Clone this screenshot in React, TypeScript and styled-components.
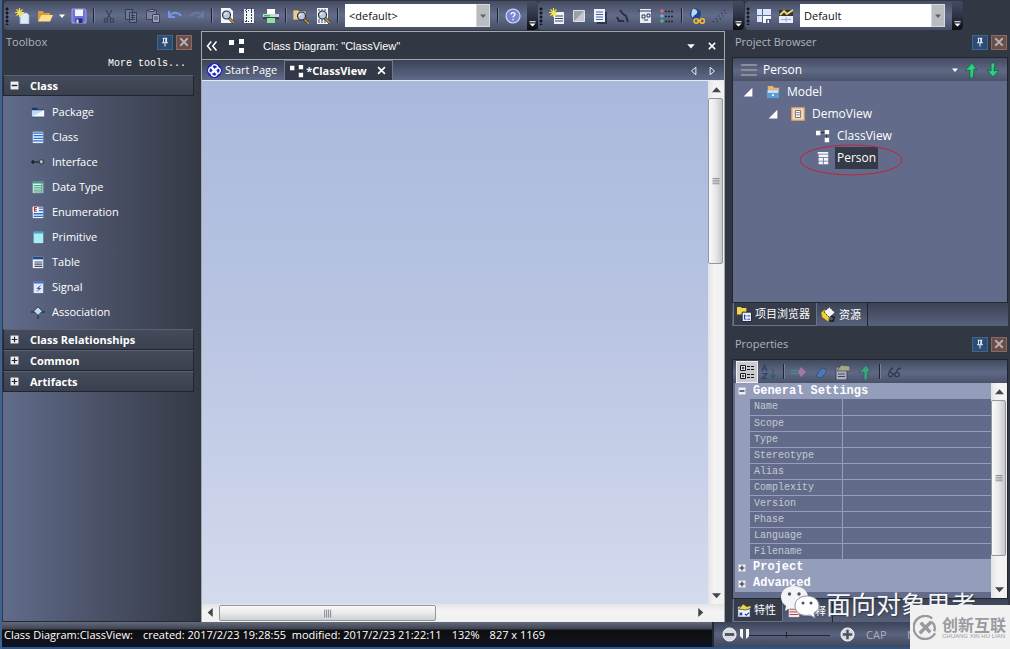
import React from 'react';
import styled, { createGlobalStyle, css } from 'styled-components';

const ui = '"Open Sans", "Noto Sans CJK SC", sans-serif';
const mono = '"Liberation Mono", "Noto Sans CJK SC", monospace';
const barGradient = 'linear-gradient(#434a60, #5f6986 55%, #4a5269)';

const Global = createGlobalStyle`
  * { box-sizing: border-box; }
  body { margin: 0; background: #323843; color: #fff; font: 11px/16px ${ui}; }
  button { border: 0; padding: 0; background: none; color: inherit; font: inherit; }
  ul { list-style: none; margin: 0; padding: 0; }
  h2, h3, p { margin: 0; font: inherit; }
  svg { display: block; flex: none; }
`;

const Window = styled.div`
  position: relative;
  display: flex;
  flex-direction: column;
  min-height: 100vh;
  overflow: hidden;
  border-left: 2px solid #3f628f;
`;

/* ---------- top toolbars ---------- */
const ToolbarRow = styled.header`
  display: flex;
  height: 31px;
  padding: 1px 0 1px 2px;
  background: #323843;
`;
const Toolbar = styled.div<{ $tail?: number }>`
  display: flex;
  align-items: center;
  height: 29px;
  margin-right: ${p => p.$tail ?? 0}px;
  border-radius: 4px;
  background: linear-gradient(#454c62, #626c8a 50%, #464e65);
  overflow: hidden;
`;
const Grip = styled.span`
  width: 7px;
  height: 18px;
  margin-right: 1px;
  background: radial-gradient(circle at 3px 2px, #15181f 1px, transparent 2px) 0 0 / 7px 4px;
`;
const ToolButton = styled.button<{ $w?: number; $dim?: boolean; $pressed?: boolean }>`
  display: grid;
  place-items: center;
  width: ${p => p.$w ?? 22}px;
  height: 22px;
  flex: none;
  opacity: ${p => (p.$dim ? 0.6 : 1)};
  ${p => p.$pressed && css`background: #c9cbd1; border: 1px solid #eceef2;`}
`;
const Separator = styled.span`
  flex: none;
  width: 2px;
  height: 15px;
  margin: 0 3px;
  background: #1f2430;
  border-right: 1px solid #77809b;
`;
const Overflow = styled.button`
  align-self: stretch;
  display: flex;
  align-items: flex-end;
  justify-content: center;
  width: 11px;
  margin-left: 3px;
  padding-bottom: 3px;
  background: linear-gradient(#454c62, #2f3546 50%, #0c0d11);
`;
const ComboBox = styled.label`
  display: flex;
  width: 145px;
  height: 23px;
  margin: 0 4px 0 3px;
  background: #fff;
`;
const Combo = styled.select`
  appearance: none;
  flex: 1;
  min-width: 0;
  border: 0;
  padding: 0 4px;
  background: #fff;
  color: #111;
  font: 11px/18px ${ui};
`;
const ComboArrow = styled.span`
  display: grid;
  place-items: center;
  width: 14px;
  background: #b9bcc0;
  border: 1px solid #d6d8da;
  color: #5d6066;
`;

/* ---------- shell ---------- */
const Body = styled.main`
  flex: 1;
  display: grid;
  grid-template-columns: 199px minmax(0, 1fr) 278px;
`;
const PanelTitle = styled.div`
  display: flex;
  align-items: center;
  gap: 3px;
  height: 22px;
  flex: none;
  padding: 0 1px 0 3px;
  color: #b0b4bd;
  h2 { flex: 1; }
`;
const PanelButton = styled.button<{ $close?: boolean }>`
  display: grid;
  place-items: center;
  width: 16px;
  height: 15px;
  border: 1px solid ${p => (p.$close ? '#8a6a62' : '#41658c')};
  background: ${p => (p.$close ? '#6d4d49' : '#2d4c74')};
`;

/* ---------- toolbox ---------- */
const Toolbox = styled.aside`
  display: flex;
  flex-direction: column;
  padding: 0 8px 0 1px;
  border-bottom: 1px solid #252a34;
`;
const MoreTools = styled.button`
  align-self: flex-end;
  height: 22px;
  margin-right: 7px;
  font: 10px/22px ${mono};
`;
const ToolboxBody = styled.div`
  flex: 1;
  margin-right: -8px;
  background: linear-gradient(90deg, #616c8b, #4a5167 50%, #363c48 95%, #323843);
`;
const GroupHeader = styled.button`
  display: flex;
  align-items: center;
  gap: 11px;
  width: 191px;
  height: 21px;
  padding-left: 6px;
  border: 1px solid #20252f;
  border-top-color: #5a6173;
  background: linear-gradient(#444b5b, #3a404e);
  line-height: 18px;
  font-weight: 700;
`;
const ToolList = styled.ul`
  padding: 3px 0 5px;
`;
const ToolItem = styled.li`
  display: flex;
  align-items: center;
  gap: 7px;
  height: 25px;
  padding-left: 28px;
`;

/* ---------- document area ---------- */
const DocumentArea = styled.section`
  display: flex;
  flex-direction: column;
  margin-right: 7px;
  border: 1px solid #a4a7ae;
  border-bottom: 0;
`;
const DocHeader = styled.div`
  display: flex;
  align-items: center;
  gap: 11px;
  height: 28px;
  padding: 0 7px 0 4px;
  border-bottom: 1px solid #a4a7ae;
  h2 { flex: 1; margin-left: 7px; font: 11px/16px "Liberation Sans", sans-serif; }
`;
const DocTabs = styled.div`
  display: flex;
  height: 21px;
  padding-right: 4px;
  border-bottom: 1px solid #e6eaf4;
  background: linear-gradient(#3b4254, #5f6a89);
`;
const DocTab = styled.div<{ $active?: boolean }>`
  display: flex;
  align-items: center;
  gap: 3px;
  padding: 0 7px 0 5px;
  ${p => p.$active && css`
    gap: 2px;
    padding-right: 5px;
    border: 1px solid #6f788e;
    border-bottom: 0;
    background: #333946;
    font-weight: 700;
  `}
`;
const TabClose = styled.button`
  margin-left: 7px;
`;
const TabArrows = styled.div`
  display: flex;
  gap: 2px;
  margin-left: auto;
`;
const Workspace = styled.div`
  flex: 1;
  display: grid;
  grid-template: minmax(0, 1fr) 18px / minmax(0, 1fr) 16px;
`;
const Canvas = styled.div`
  background: linear-gradient(#a9b8dc, #b9c4e2 45%, #d3dbee);
`;
const VScroll = styled.div`
  display: flex;
  flex-direction: column;
  align-items: stretch;
  width: 16px;
  background: linear-gradient(90deg, #e4e4e6, #f4f4f4 40%, #f0f0f0);
`;
const HScroll = styled.div`
  display: flex;
  align-items: stretch;
  background: linear-gradient(#e4e4e6, #f4f4f4 40%, #f0f0f0);
`;
const ScrollButton = styled.button`
  display: grid;
  place-items: center;
  flex: none;
  width: 16px;
  height: 17px;
`;
const Track = styled.div<{ $vertical?: boolean }>`
  flex: 1;
  display: flex;
  min-height: 0;
  padding: ${p => (p.$vertical ? '0 1px 0 0' : '1px')};
`;
const Thumb = styled.div<{ $vertical?: boolean; $size: number }>`
  display: grid;
  place-items: center;
  border: 1px solid #93969b;
  border-radius: 2px;
  ${p => p.$vertical
    ? css`width: 100%; height: ${p.$size}%; background: linear-gradient(90deg, #fafafa, #e9e9eb 50%, #c6c8cc);`
    : css`width: ${p.$size}%; height: 100%; background: linear-gradient(#fafafa, #e9e9eb 50%, #cfd1d4);`}
`;

/* ---------- right side ---------- */
const RightColumn = styled.aside`
  display: flex;
  flex-direction: column;
  padding-right: 2px;
`;
const Framed = styled.div<{ $grow?: boolean }>`
  display: flex;
  flex-direction: column;
  margin-top: 4px;
  border: 1px solid #20252f;
  border-bottom: 0;
  background: #626c8a;
  ${p => p.$grow && css`flex: 1;`}
`;
const PropertiesPanel = styled.section`
  flex: 1;
  display: flex;
  flex-direction: column;
  padding-top: 7px;
`;
const BrowserBar = styled.div`
  display: flex;
  align-items: center;
  height: 23px;
  padding: 0 3px 0 8px;
  background: ${barGradient};
  font-size: 12px;
`;
const BrowserName = styled.span`
  flex: 1;
  margin-left: 6px;
`;
const Tree = styled.ul`
  height: 221px;
  font-size: 12px;
`;
const TreeRow = styled.li<{ $level: number }>`
  position: relative;
  display: flex;
  align-items: center;
  height: 22px;
  padding-left: ${p => 10 + p.$level * 25}px;
`;
const Expander = styled.span`
  width: 10px;
  margin-right: 13px;
`;
const TreeLabel = styled.span<{ $selected?: boolean }>`
  margin-left: 5px;
  padding: 2px;
  line-height: 18px;
  ${p => p.$selected && css`background: #343a47;`}
`;
const Circled = styled.svg`
  position: absolute;
  left: 65px;
  top: -3px;
`;
const SideTabs = styled.div`
  display: flex;
  height: 24px;
  flex: none;
  padding-left: 1px;
  border-top: 1px solid #232833;
  background: linear-gradient(#3c4356, #58617b);
`;
const SideTab = styled.button<{ $active?: boolean }>`
  display: flex;
  align-items: center;
  gap: 3px;
  padding: 0 6px 0 4px;
  border-right: 1px solid #20252f;
  ${p => p.$active && css`background: #363c49; border: 1px solid #6a738c; border-top: 0; padding-left: 3px;`}
`;
const PropBar = styled.div`
  display: flex;
  align-items: center;
  height: 23px;
  padding-left: 3px;
  background: ${barGradient};
`;
const PropArea = styled.div`
  flex: 1;
  display: flex;
  justify-content: space-between;
  padding-left: 2px;
`;
const PropTable = styled.table`
  flex: 1;
  align-self: flex-start;
  border-collapse: collapse;
  table-layout: fixed;
  font: 10px/15px ${mono};
  td, th { padding: 0; height: 16px; text-align: left; font-weight: 400; }
`;
const GroupCell = styled.th`
  && { background: #949dba; font: 700 12px/15px ${mono}; }
`;
const GroupToggle = styled.button`
  display: flex;
  align-items: center;
  gap: 7px;
  padding-left: 3px;
  height: 16px;
`;
const Gutter = styled.td`
  width: 15px;
  background: #949dba;
`;
const PropName = styled.th`
  && { padding-left: 4px; }
  color: #c6c9d1;
  border-right: 1px solid #949dba;
  border-bottom: 1px solid #949dba;
`;
const PropValue = styled.td`
  border-bottom: 1px solid #949dba;
`;

/* ---------- status bar ---------- */
const Footer = styled.footer`
  display: flex;
  height: 27px;
  border-bottom: 2px solid #34547f;
`;
const StatusText = styled.p`
  flex: 1;
  display: flex;
  align-items: center;
  gap: 10px;
  padding-left: 2px;
  white-space: pre;
  background: linear-gradient(#646b7b, #3e4350 7px, #0e0e12 8px, #101116 18px, #0b1430);
`;
const StatusTools = styled.div`
  display: flex;
  align-items: center;
  width: 298px;
  padding-left: 8px;
  border-left: 2px solid #232833;
  background: linear-gradient(#3c4356, #5a637e 50%, #3f475c);
  color: #a9afbf;
`;
const ZoomSlider = styled.input`
  appearance: none;
  width: 94px;
  height: 16px;
  margin: 0 6px 0 3px;
  background:
    linear-gradient(#20242e, #20242e) 46px 5px / 1px 6px no-repeat,
    linear-gradient(#20242e, #20242e) 0 8px / 90px 1px no-repeat;
  &::-webkit-slider-thumb {
    appearance: none;
    width: 9px;
    height: 12px;
    background: linear-gradient(90deg, #f4f5f7 3px, #555b6b 3px, #555b6b 6px, #f4f5f7 6px);
    clip-path: polygon(0 0, 100% 0, 100% 65%, 50% 100%, 0 65%);
  }
`;
const KeyState = styled.span`
  margin-left: 11px;
  width: 30px;
`;

/* ---------- overlays ---------- */
const ChatMark = styled.div`
  position: absolute;
  right: 34px;
  bottom: 28px;
  display: flex;
  align-items: center;
  gap: 6px;
  font: 25px/34px "Noto Sans CJK SC", sans-serif;
  color: #f6f7f9;
  text-shadow: 1px 1px 1px #3b4050;
`;
const SiteMark = styled.div`
  position: absolute;
  right: 0;
  bottom: 0;
  display: flex;
  align-items: center;
  gap: 4px;
  width: 100px;
  height: 44px;
  padding-left: 3px;
  background: #f1f1f2;
  color: #9a9b9f;
  white-space: nowrap;
`;
const SiteName = styled.div`
  font: 700 16px/18px "Noto Sans CJK SC", sans-serif;
  small { display: block; font: 6px/7px "Liberation Sans", sans-serif; }
`;

/* ---------- icons ---------- */
const magnifier = (
  <g>
    <path d="M10 10l5 5" stroke="#3a3420" strokeWidth="3" />
    <path d="M10 10l5 5" stroke="#cfa53a" strokeWidth="1.4" />
    <circle cx="7.500" cy="7" r="4" fill="#b9c9de" stroke="#2a3342" strokeWidth="1.200" />
    <path d="M5.500 7a2 2 0 0 1 2-2" stroke="#fff" fill="none" />
  </g>
);

const sparkle = <path d="M4.500 0v9M0 4.500h9M1.500 1.500l6 6M7.500 1.500l-6 6" stroke="#f4e34a" strokeWidth="1.2" />;

const art: Record<string, React.ReactNode> = {
  new: <><path d="M5 5h7l2 2v9H5z" fill="#dfeaf8" stroke="#8fa9d6" strokeWidth=".8" />{sparkle}</>,
  open: <><path d="M1 13V3h5l1 2h6v3H5z" fill="#d69b3c" /><path d="M1 13.500 4.500 7H16l-3 6.500z" fill="#ffdf8a" /></>,
  save: <><path d="M1 1h13l1 1v13H1z" fill="#6c74d6" stroke="#a9aef0" strokeWidth=".8" /><path d="M4 1.500h8V8H4z" fill="#f1f3fb" /><path d="M4.500 10.500h7V15h-7z" fill="#2b2f72" /><path d="M5.500 11.500h2V15h-2z" fill="#e0e3f8" /></>,
  cut: <g stroke="#222838" fill="none" strokeWidth="1.2"><path d="M5 2l5 9M11 2 6 11" /><circle cx="5" cy="12.500" r="1.800" /><circle cx="11" cy="12.500" r="1.800" /></g>,
  copy: <g fill="#7782a6" stroke="#1e2434"><path d="M2.500 1.500h7v10h-7zM6.500 4.500h7v10h-7z" /><path d="M8 7.500h4M8 9.500h4M8 11.500h4" /></g>,
  paste: <g fill="#8a93b2" stroke="#262d40"><path d="M1.500 2.500h10v9h-10z" /><path d="M4 1.500h5v2H4z" fill="#cdd3e4" /><path d="M7.500 6.500h7v8h-7z" fill="#c4cbdf" /><path d="M9 9h4M9 11h4" /></g>,
  undo: <path d="M2 3v6h6M2.500 8.500C5 3.500 11 3.500 14 8" stroke="#7593e8" strokeWidth="2" fill="none" />,
  redo: <path d="M14 3v6H8M13.500 8.500C11 3.500 5 3.500 2 8" stroke="#6a7cae" strokeWidth="1.6" fill="none" />,
  preview: <><path d="M2 0h9l3 3v12H2z" fill="#f3f6fb" />{magnifier}</>,
  page: <><path d="M3 1h10v14H3z" fill="#f4f5f8" /><path d="M5.500 0v16M10.500 0v16" stroke="#343b50" strokeDasharray="2 1" /><path d="M1 2.500h14M1 13.500h14" stroke="#343b50" strokeDasharray="1 2" /></>,
  print: <><path d="M4 1h8v5H4z" fill="#fff" /><path d="M0 6h16v5H0z" fill="#cfd5dd" /><path d="M0 9h16v2.500H0z" fill="#3b4454" /><path d="M1 7h6v1.500H1z" fill="#33c04a" /><path d="M4 10h8v5H4z" fill="#8ee39a" /></>,
  find: <><path d="M0 2h5l1 1h7v9H0z" fill="#e6cf8e" stroke="#5a4c26" strokeWidth=".6" /><g transform="translate(1 1)">{magnifier}</g></>,
  find2: <><path d="M2 0h11v16H2z" fill="#f3f6fb" /><path d="M3 12h8M3 14h8M3 2h8" stroke="#3d4760" strokeDasharray="2 1" />{magnifier}</>,
  help: <><circle cx="8" cy="8" r="7" fill="#7b86d2" stroke="#d8dcf6" strokeWidth="1.200" /><path d="M6 6.500C6 4 10 4 10 6.300 10 8 8 7.800 8 9.500M8 11v1.200" stroke="#fff" strokeWidth="1.300" fill="none" /></>,
  newElement: <><path d="M5 4h10v12H5z" fill="#eef1f8" /><path d="M6 8h8M6 10.500h8M6 13h8" stroke="#3e4866" />{sparkle}</>,
  square: <><path d="M2.500 2.500h11v11h-11z" fill="#9b9fa8" stroke="#dfe1e6" /><path d="M3 13 13 3v10z" fill="#c6c8cd" /></>,
  list: <><path d="M1 1h11v13H1z" fill="#eef2fb" /><path d="M12 4h2v12H4v-2h8z" fill="#2d3650" /><path d="M3 4h7M3 6.500h7M3 9h7M3 11.500h7" stroke="#4a5fae" /></>,
  dark: <path d="M2 9l2 4h5M5 2l3 4 3 2 2 6" stroke="#2a303e" strokeWidth="2" fill="none" />,
  diagram: <><path d="M3 1h11v14H3z" fill="#e9edf7" /><path d="M1 3h14M5 7h3v3H5zM10 6h3v3h-3zM7 12h4" stroke="#323b56" fill="none" /></>,
  notes: <><circle cx="3" cy="3" r="1.800" fill="#e06a6a" /><circle cx="3" cy="8" r="1.800" fill="#7fa8ea" /><circle cx="3" cy="13" r="1.800" fill="#55b87a" /><path d="M6 3.500h9M6 8.500h9M6 13.500h9" stroke="#1f2535" strokeDasharray="2 1" strokeWidth="1.400" /></>,
  world: <><circle cx="6.500" cy="6" r="5.500" fill="#1f4690" /><path d="M4 1c3 0 5 2 4 4S5 7 4 9 1 5 4 1z" fill="#b9d8f2" /><path d="M5 13a2 2 0 0 1 4.500 0 2 2 0 0 1-4.500 0zM11 13a2 2 0 0 1 4.500 0 2 2 0 0 1-4.500 0zM8 13h4" stroke="#f0b93a" strokeWidth="1.600" fill="none" /></>,
  dots: <path d="M2 14 14 2M6 14l9-9" stroke="#2b3244" strokeDasharray="1 3" strokeWidth="1.400" />,
  layout: <><path d="M1 1h5v6H1zM7 1h8v6H7zM1 8h5v6H1z" fill="#dbe6fb" /><path d="M7 8h8v7H7z" fill="#f7f9fe" /><path d="M10 11h5v5h-5z" fill="#465a8a" /><path d="M11.500 12h1.500v3h-1.500z" fill="#fff" /></>,
  layout2: <><path d="M1 5h14v10H1z" fill="#e8eefb" /><path d="M1 2h14v6H1z" fill="#35362f" /><path d="M2 7l4-4 3 3 6-4" stroke="#ecd86b" strokeWidth="1.800" fill="none" /><path d="M8 9v5M3 11.500h10" stroke="#9aacd6" /></>,
  package: <><path d="M1 3h6l1 2h7v9H1z" fill="#1e3a63" /><path d="M1 6h14v7H1z" fill="#bdd9f5" /><path d="M1 13 15 6v7z" fill="#f2f8fe" /></>,
  class: <><path d="M2 2h12v13H2z" fill="#e3effe" /><path d="M2 3.500h12M3 6.500h11M3 9.500h11M2 12.500h12" stroke="#2f6fd0" strokeWidth="1.500" /></>,
  interface: <><path d="M0 8h10M3 6l-2 2 2 2" stroke="#14181f" fill="none" strokeWidth="1.300" /><circle cx="12" cy="8" r="2.600" fill="#8d939e" stroke="#2c313b" /><circle cx="11.500" cy="7.300" r="1" fill="#e6e8ec" /></>,
  datatype: <><path d="M2 2h12v13H2z" fill="#dff7ee" /><path d="M2 2h12v2H2z" fill="#2f9c86" /><path d="M3 6.500h9M3 9h9M3 11.500h9M3 13.700h9M12.500 4v11" stroke="#2b8a74" strokeWidth="1.100" /></>,
  enumeration: <><path d="M2 2h12v13H2z" fill="#e3effe" /><path d="M9 3.500h5M9 6.500h5M3 10h11M3 13h11" stroke="#2f6fd0" strokeWidth="1.500" /><path d="M2 2h6v6H2z" fill="#fff" /><path d="M7 2.800H4v4.400h3M4 5h2.500" stroke="#c72a3c" strokeWidth="1.200" fill="none" /></>,
  primitive: <><path d="M3 2h11v13H3z" fill="#a9ecf7" /><path d="M3 2h11v2H3z" fill="#3aa8c6" /></>,
  table: <><path d="M2 2h12v13H2z" fill="#eef3fb" /><path d="M2 2h12v3H2z" fill="#1c4b86" /><path d="M4 8h9M4 10.500h9M4 13h9" stroke="#3c4a66" strokeWidth="1.300" /></>,
  signal: <><path d="M3 2h11v13H3z" fill="#dfe9fb" /><path d="M3 2h11v2H3z" fill="#3a6cc0" /><path d="M12 5 6 10h3l-3 4 6-5H9z" fill="#2450a8" /></>,
  association: <><path d="M0 8h16M8 8v8" stroke="#10141c" /><path d="M8 2l5 5-5 5-5-5z" fill="#b9dbf5" stroke="#1e2c42" /></>,
  model: <><path d="M2 1h6l1 2h6v5H2z" fill="#e8b277" /><path d="M1 6h14v9H1z" fill="#5b9bd6" /><path d="M2 6h12v3H2z" fill="#cfe5f8" /><path d="M7 10.500h2v2H7z" fill="#fff" /></>,
  view: <><path d="M1 1h14v14H1z" fill="#f6dcc0" stroke="#e7a565" strokeWidth="1.500" /><path d="M5 4h6v8H5z" fill="#fff" stroke="#5a6175" /><path d="M6 6.500h4M6 9h4" stroke="#5a6175" /></>,
  element: <><path d="M2 1h12v2H2zM3 4h11v3H3zM3 8h11v3H3zM3 12h11v3H3z" fill="#f2f5fb" /><path d="M8.500 7v8" stroke="#6d7898" /></>,
  squares: <><path d="M6 4h4M12 6v4" stroke="#20242e" /><path d="M0 2h5v5H0zM10 1h5v5h-5zM10 10h5v5h-5z" fill="#fff" /></>,
  startPage: <><circle cx="8" cy="8" r="8" fill="#1b22c8" /><g stroke="#fff" strokeWidth="1.500" fill="none" transform="rotate(20 8 8)"><path d="M8 8C3 8 3 2 7 2s4 4 1 6c0-5 6-5 6-1s-4 4-6 1c5 0 5 6 1 6s-4-4-1-6c0 5-6 5-6 1s4-4 6-1z" /></g></>,
  browserTab: <><path d="M0 0h4l1 1h5v7H0z" fill="#f1d64c" /><path d="M5.500 5.500h10v10h-10z" fill="#e9eefa" stroke="#1b2238" /><path d="M8 8v5h2M8 9.500h2M11 9.500h3M11 13h3" stroke="#24418e" fill="none" /></>,
  resource: <><path d="M0 6l4-4 5 8-1 6-7-5z" fill="#f0cf2e" stroke="#6d5a10" strokeWidth=".6" /><path d="M3 5l6-5 6 6-6 5z" fill="#f3f5f8" stroke="#20242e" strokeDasharray="2 1" /><path d="M11 10l3 1-1 4H9" stroke="#15181f" strokeWidth="1.600" fill="none" /></>,
  propsTab: <><path d="M1 4h14v12H1z" fill="#f0f3fb" stroke="#25366e" strokeWidth=".6" /><path d="M2 7l5-6 4 3 5-1v3l-6 2z" fill="#ead54e" stroke="#3c3a22" strokeWidth=".8" /><path d="M3 11l3 3M6 11l-3 3M9 12.500l1.500 1.500L14 11" stroke="#1d3fae" strokeWidth="1.300" fill="none" /></>,
  notesTab: <><path d="M2 3h12v12H2z" fill="#f2e6e6" /><path d="M3 6h10M3 9h10M3 12h10" stroke="#a63a3a" /></>,
  categorized: <><path d="M1.500 1.500h5v5h-5zM1.500 9.500h5v5h-5z" fill="#fff" stroke="#14181f" /><path d="M2.500 4h3M4 2.500v3M2.500 12h3M4 10.500v3M8 2.500h3M8 5.500h3M8 10.500h3M8 13.500h3M12 2.500h3M12 5.500h3M12 10.500h3M12 13.500h3" stroke="#14181f" /></>,
  sort: <><path d="M1 7l2.500-6L6 7M2 5h3M1 9.500h5l-5 5h5" stroke="#1c2a58" fill="none" strokeWidth="1.200" /><path d="M12 5v9M9.500 11l2.500 3 2.500-3" stroke="#1a5a4a" fill="none" strokeWidth="1.400" /></>,
  addTag: <><path d="M0 6.500h7M0 9.500h7" stroke="#2fae74" strokeWidth="1.400" /><path d="M10 3l5 5-5 5-3-5z" fill="#d884be" /></>,
  tag: <path d="M4 10l5-6 4 1v4l-5 5-4-1z" fill="#3f88d8" stroke="#1e3a63" strokeWidth=".8" />,
  propPage: <><path d="M1 3h11v13H1z" fill="#e2e6ee" stroke="#303748" /><path d="M3 10h7M3 12.500h7" stroke="#303748" /><path d="M2 7l4-6 9 1v5H9z" fill="#d8d888" stroke="#3c3f38" strokeWidth=".8" /></>,
  up: <path d="M9 1l5 7-3-1-1 9H7V8L2 9z" fill="#2fcf80" stroke="#0c5a38" strokeWidth=".7" />,
  down: <path d="M8 15 2 8l4 1V1h4l-1 8 5-1z" fill="#2fcf80" stroke="#0c5a38" strokeWidth=".7" />,
  glasses: <g stroke="#1c2130" fill="none" strokeWidth="1.300"><circle cx="3.500" cy="10.500" r="2.200" /><circle cx="10" cy="10.500" r="2.200" /><path d="M2 8l3-4 1 1M9 8l3-4 2 1M6 10h2" /></g>,
  lines: <path d="M0 3h16M0 8h16M0 13h16" stroke="#8b8e96" strokeWidth="2" />,
  pin: <path d="M5 3h6M6 3v6M10 3v6M9 3v6M4 9h8M8 9v5" stroke="#dfe6f0" strokeWidth="1.400" fill="none" />,
  close: <path d="M3 3l10 10M13 3 3 13" stroke="currentColor" strokeWidth="2.400" />,
  caret: <path d="M2 5h12l-6 7z" fill="currentColor" />,
  overflow: <path d="M1 3h14v2H1zM1 8h14l-7 7z" fill="#fff" />,
  chevrons: <path d="M7 2 2 8l5 6M14 2 9 8l5 6" stroke="#fff" strokeWidth="2" fill="none" />,
  triLeft: <path d="M11 2v12L4 8z" stroke="#fff" strokeWidth="1.400" fill="none" />,
  triRight: <path d="M5 2v12l7-6z" stroke="#fff" strokeWidth="1.400" fill="none" />,
  arrowUp: <path d="M0 13 8 4l8 9z" fill="#43464c" />,
  arrowDown: <path d="M0 4l8 9 8-9z" fill="#43464c" />,
  arrowLeft: <path d="M12 0v16L3 8z" fill="#43464c" />,
  arrowRight: <path d="M4 0v16l9-8z" fill="#43464c" />,
  expanded: <path d="M15 1v14H1z" fill="#fff" />,
  gripV: <path d="M1 3h14M1 6.500h14M1 10h14M1 13.500h14" stroke="#6d7075" strokeWidth="1.400" />,
  gripH: <path d="M3 1v14M6.500 1v14M10 1v14M13.500 1v14" stroke="#6d7075" strokeWidth="1.400" />,
  minusBox: <><path d="M1 1h14v14H1z" fill="#eceef3" /><path d="M3 8h10" stroke="#20242e" strokeWidth="2.500" /></>,
  plusBox: <><path d="M1 1h14v14H1z" fill="#eceef3" /><path d="M3 8h10M8 3v10" stroke="#20242e" strokeWidth="2.200" /></>,
  zoomOut: <><circle cx="8" cy="8" r="7" fill="#d9dbe0" stroke="#f4f5f7" /><path d="M3 6.500h10v3H3z" fill="#4c5262" /></>,
  zoomIn: <><circle cx="8" cy="8" r="7" fill="#d9dbe0" stroke="#f4f5f7" /><path d="M3 8h10M8 3v10" stroke="#4c5262" strokeWidth="2.600" /></>,
};

const Icon = ({ name, size = 14 }: { name: string; size?: number }) => (
  <svg width={size} height={size} viewBox="0 0 16 16" fill="none" aria-hidden="true">{art[name]}</svg>
);

const Tools = ({ names, dim }: { names: string[]; dim?: boolean }) => (
  <>{names.map(n => <ToolButton key={n} $dim={dim} aria-label={n}><Icon name={n} size={16} /></ToolButton>)}</>
);

const Picker = ({ label, value }: { label: string; value: string }) => (
  <ComboBox>
    <Combo aria-label={label}><option>{value}</option></Combo>
    <ComboArrow><Icon name="caret" size={8} /></ComboArrow>
  </ComboBox>
);

const TitleBar = ({ title }: { title: string }) => (
  <PanelTitle>
    <h2>{title}</h2>
    <PanelButton aria-label={`Pin ${title}`}><Icon name="pin" size={12} /></PanelButton>
    <PanelButton $close aria-label={`Close ${title}`}><Icon name="close" size={12} /></PanelButton>
  </PanelTitle>
);

const VerticalScroll = ({ size }: { size: number }) => (
  <VScroll>
    <ScrollButton aria-label="Scroll up"><Icon name="arrowUp" size={9} /></ScrollButton>
    <Track $vertical><Thumb $vertical $size={size}><Icon name="gripV" size={8} /></Thumb></Track>
    <ScrollButton aria-label="Scroll down"><Icon name="arrowDown" size={9} /></ScrollButton>
  </VScroll>
);

const classTools = [
  ['package', 'Package'], ['class', 'Class'], ['interface', 'Interface'],
  ['datatype', 'Data Type'], ['enumeration', 'Enumeration'], ['primitive', 'Primitive'],
  ['table', 'Table'], ['signal', 'Signal'], ['association', 'Association'],
];

const settings = ['Name', 'Scope', 'Type', 'Stereotype', 'Alias', 'Complexity', 'Version', 'Phase', 'Language', 'Filename'];

const PropGroup = ({ label, open }: { label: string; open?: boolean }) => (
  <tr>
    <GroupCell colSpan={3}>
      <GroupToggle><Icon name={open ? 'minusBox' : 'plusBox'} size={8} />{label}</GroupToggle>
    </GroupCell>
  </tr>
);

export default function App() {
  return (
    <Window>
      <Global />
      <ToolbarRow>
        <Toolbar>
          <Grip />
          <Tools names={['new', 'open']} />
          <ToolButton $w={12} aria-label="Open recent"><Icon name="caret" size={8} /></ToolButton>
          <Tools names={['save']} />
          <Separator />
          <Tools dim names={['cut', 'copy', 'paste']} />
          <Tools names={['undo', 'redo']} />
          <Separator />
          <Tools names={['preview', 'page', 'print']} />
          <Separator />
          <Tools names={['find', 'find2']} />
          <Separator />
          <Picker label="Filter" value="<default>" />
          <Separator />
          <Tools names={['help']} />
          <Overflow aria-label="Toolbar options"><Icon name="overflow" size={7} /></Overflow>
        </Toolbar>
        <Toolbar $tail={1}>
          <Grip />
          <Tools names={['newElement', 'square', 'list', 'dark', 'diagram', 'notes']} />
          <Separator />
          <Tools names={['world', 'dots']} />
          <Overflow aria-label="Toolbar options"><Icon name="overflow" size={7} /></Overflow>
        </Toolbar>
        <Toolbar>
          <Grip />
          <Tools names={['layout', 'layout2']} />
          <Picker label="Workspace" value="Default" />
          <Overflow aria-label="Toolbar options"><Icon name="overflow" size={7} /></Overflow>
        </Toolbar>
      </ToolbarRow>

      <Body>
        <Toolbox>
          <TitleBar title="Toolbox" />
          <MoreTools>More tools...</MoreTools>
          <ToolboxBody>
            <GroupHeader><Icon name="minusBox" size={9} />Class</GroupHeader>
            <ToolList>
              {classTools.map(([icon, label]) => (
                <ToolItem key={label}><Icon name={icon} size={14} />{label}</ToolItem>
              ))}
            </ToolList>
            {['Class Relationships', 'Common', 'Artifacts'].map(label => (
              <GroupHeader key={label}><Icon name="plusBox" size={9} />{label}</GroupHeader>
            ))}
          </ToolboxBody>
        </Toolbox>

        <DocumentArea>
          <DocHeader>
            <Icon name="chevrons" size={12} />
            <Icon name="squares" size={16} />
            <h2>Class Diagram: "ClassView"</h2>
            <button aria-label="Window list"><Icon name="caret" size={10} /></button>
            <button aria-label="Close document"><Icon name="close" size={10} /></button>
          </DocHeader>
          <DocTabs>
            <DocTab><Icon name="startPage" size={15} />Start Page</DocTab>
            <DocTab $active>
              <Icon name="squares" size={14} />*ClassView
              <TabClose aria-label="Close tab"><Icon name="close" size={11} /></TabClose>
            </DocTab>
            <TabArrows>
              <ToolButton $w={16} aria-label="Previous tab"><Icon name="triLeft" size={10} /></ToolButton>
              <ToolButton $w={16} aria-label="Next tab"><Icon name="triRight" size={10} /></ToolButton>
            </TabArrows>
          </DocTabs>
          <Workspace>
            <Canvas />
            <VerticalScroll size={34} />
            <HScroll>
              <ScrollButton aria-label="Scroll left"><Icon name="arrowLeft" size={9} /></ScrollButton>
              <Track><Thumb $size={46}><Icon name="gripH" size={9} /></Thumb></Track>
              <ScrollButton aria-label="Scroll right"><Icon name="arrowRight" size={9} /></ScrollButton>
            </HScroll>
            <HScroll />
          </Workspace>
        </DocumentArea>

        <RightColumn>
          <TitleBar title="Project Browser" />
          <Framed>
            <BrowserBar>
              <Icon name="lines" size={16} />
              <BrowserName>Person</BrowserName>
              <ToolButton $w={10} aria-label="Browser menu"><Icon name="caret" size={8} /></ToolButton>
              <ToolButton aria-label="Move up"><Icon name="up" size={16} /></ToolButton>
              <ToolButton aria-label="Move down"><Icon name="down" size={16} /></ToolButton>
            </BrowserBar>
            <Tree>
              <TreeRow $level={0}><Expander><Icon name="expanded" size={10} /></Expander><Icon name="model" /><TreeLabel>Model</TreeLabel></TreeRow>
              <TreeRow $level={1}><Expander><Icon name="expanded" size={10} /></Expander><Icon name="view" /><TreeLabel>DemoView</TreeLabel></TreeRow>
              <TreeRow $level={2}><Expander /><Icon name="squares" /><TreeLabel>ClassView</TreeLabel></TreeRow>
              <TreeRow $level={2}>
                <Expander /><Icon name="element" /><TreeLabel $selected>Person</TreeLabel>
                <Circled width="106" height="32" viewBox="0 0 106 32" fill="none">
                  <ellipse cx="53" cy="16" rx="51" ry="15" stroke="#c4203c" />
                </Circled>
              </TreeRow>
            </Tree>
          </Framed>
          <SideTabs>
            <SideTab $active><Icon name="browserTab" size={15} />项目浏览器</SideTab>
            <SideTab><Icon name="resource" size={15} />资源</SideTab>
          </SideTabs>

          <PropertiesPanel>
            <TitleBar title="Properties" />
            <Framed $grow>
              <PropBar>
                <ToolButton $pressed aria-label="Categorized"><Icon name="categorized" size={16} /></ToolButton>
                <Tools dim names={['sort']} />
                <Separator />
                <Tools dim names={['addTag', 'tag', 'propPage', 'up']} />
                <Separator />
                <Tools dim names={['glasses']} />
              </PropBar>
              <PropArea>
                <PropTable>
                  <colgroup><col width="15" /><col width="92" /><col /></colgroup>
                  <tbody>
                    <PropGroup label="General Settings" open />
                    {settings.map(s => (
                      <tr key={s}><Gutter /><PropName scope="row">{s}</PropName><PropValue /></tr>
                    ))}
                    <PropGroup label="Project" />
                    <PropGroup label="Advanced" />
                  </tbody>
                </PropTable>
                <VerticalScroll size={86} />
              </PropArea>
            </Framed>
          </PropertiesPanel>
          <SideTabs>
            <SideTab $active><Icon name="propsTab" />特性</SideTab>
            <SideTab><Icon name="notesTab" />注释</SideTab>
          </SideTabs>
        </RightColumn>
      </Body>

      <Footer>
        <StatusText>
          <span>Class Diagram:ClassView:</span>
          <span>created: 2017/2/23 19:28:55  modified: 2017/2/23 21:22:11</span>
          <span>132%</span>
          <span>827 x 1169</span>
        </StatusText>
        <StatusTools>
          <button aria-label="Zoom out"><Icon name="zoomOut" size={15} /></button>
          <ZoomSlider type="range" aria-label="Zoom" defaultValue={0} />
          <button aria-label="Zoom in"><Icon name="zoomIn" size={15} /></button>
          <KeyState>CAP</KeyState>
          <KeyState>NUM</KeyState>
        </StatusTools>
      </Footer>

      <ChatMark>
        <svg width="40" height="36" viewBox="0 0 40 36">
          <path d="M14 1C6 1 1 6 1 12c0 4 2 7 5 9l-1 5 5-3c10 2 18-3 18-11C28 6 22 1 14 1z" fill="#f3f4f6" />
          <path d="M27 11c-7 0-12 4-12 10s6 11 15 9l5 3-1-5c3-2 5-4 5-7 0-6-5-10-12-10z" fill="#fff" stroke="#8d93a6" />
          <g fill="#4c5266"><circle cx="9.500" cy="9" r="1.700" /><circle cx="19" cy="9" r="1.700" /><circle cx="23" cy="18" r="1.500" /><circle cx="31" cy="18" r="1.500" /></g>
        </svg>
        面向对象思考
      </ChatMark>
      <SiteMark>
        <svg width="25" height="25" viewBox="0 0 26 26" fill="none" stroke="#98999d">
          <path d="M20 3.500A12 12 0 1 0 23 19" strokeWidth="2.500" />
          <path d="M8 8l10 10M19 7 7 19" strokeWidth="3.500" />
          <path d="M19 7a8 8 0 0 1 3 10" strokeWidth="2.500" />
        </svg>
        <SiteName>创新互联<small>CHUANG XIN HU LIAN</small></SiteName>
      </SiteMark>
    </Window>
  );
}
